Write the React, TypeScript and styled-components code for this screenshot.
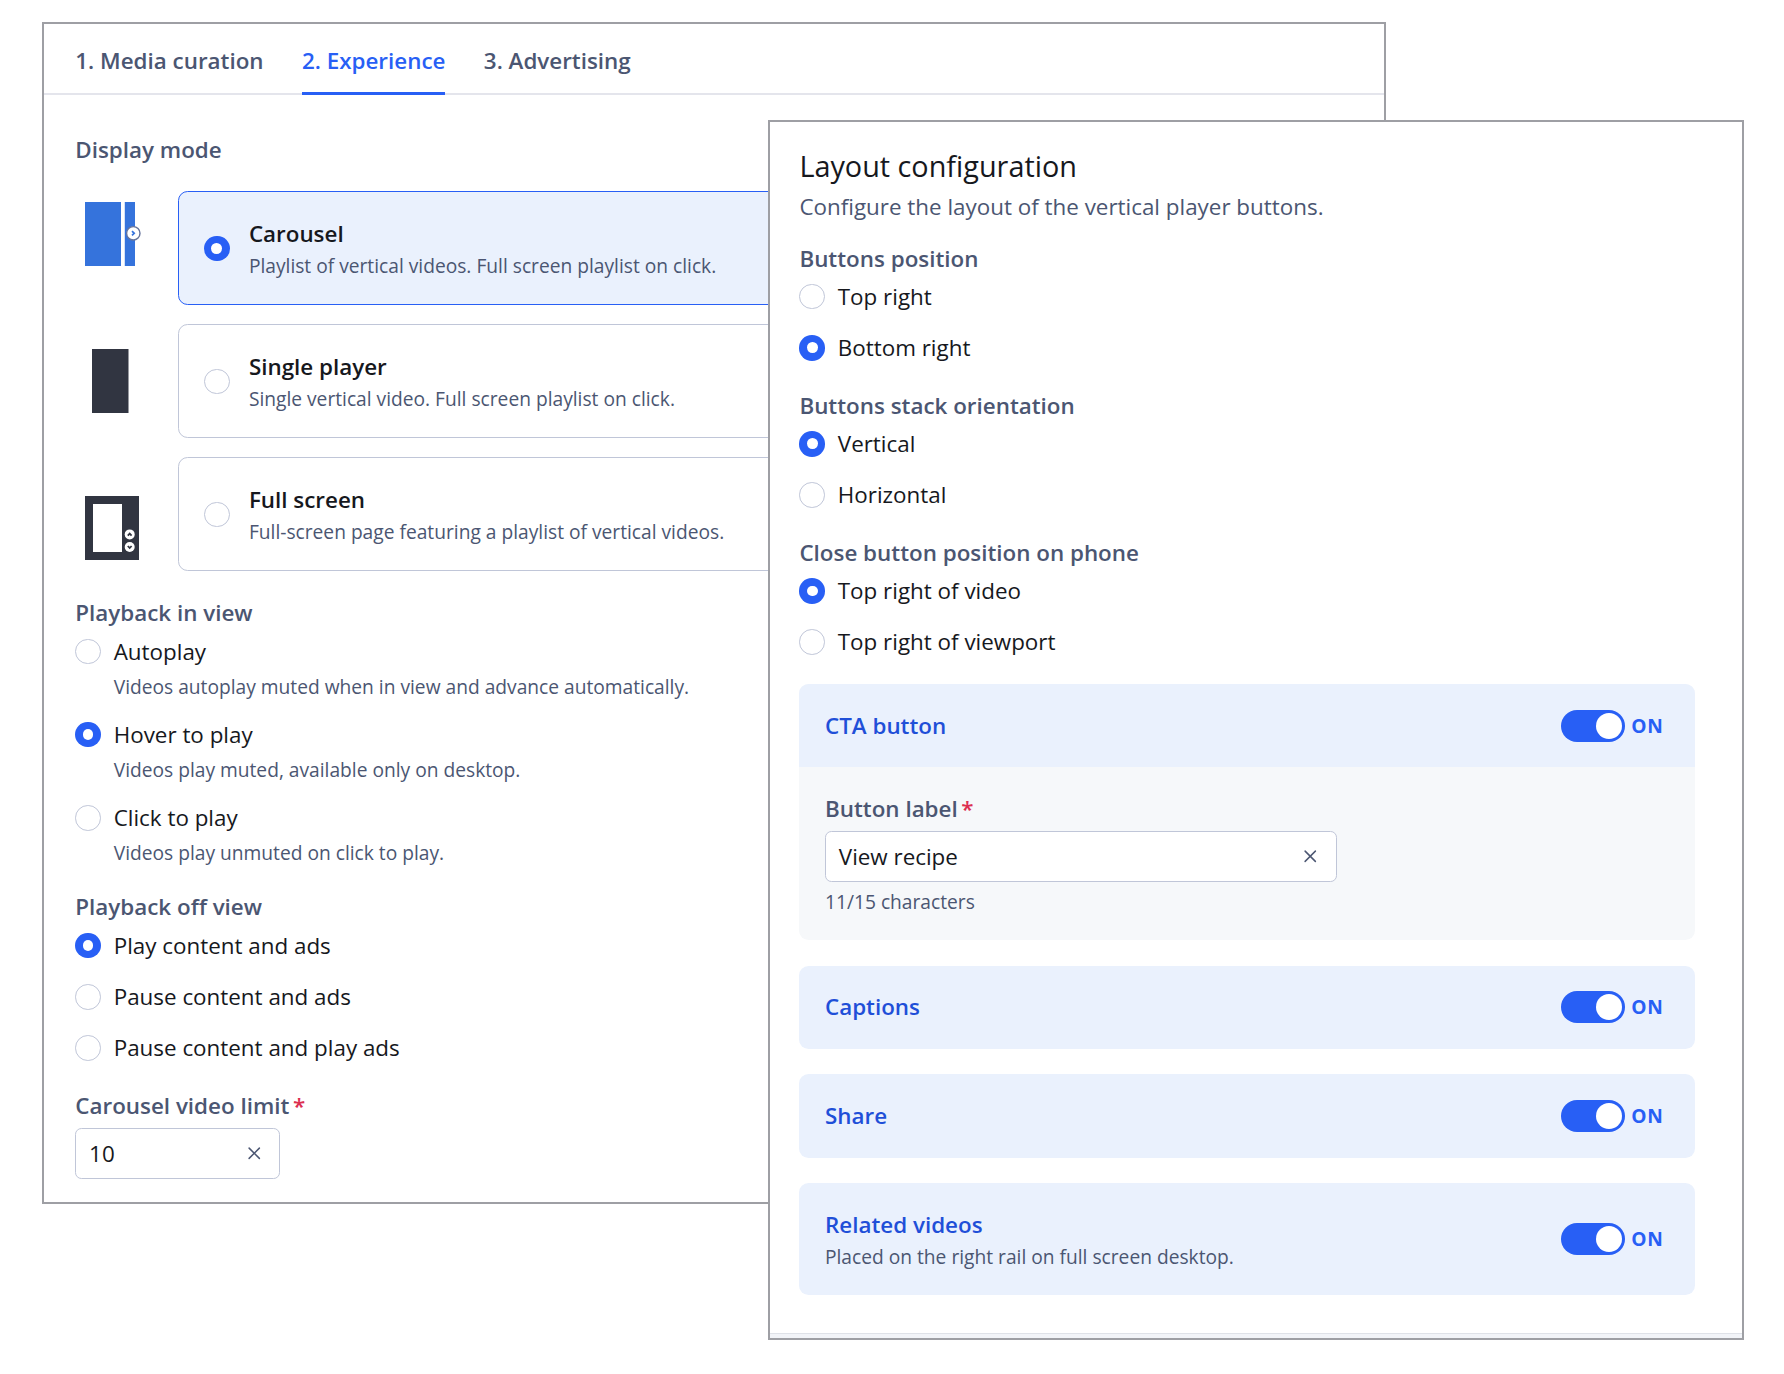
import React from 'react';
import styled, { createGlobalStyle, css } from 'styled-components';
import { X } from 'lucide-react';

const color = {
  frame: '#9e9fa4',
  slate: '#4b5672',
  ink: '#16181d',
  blue: '#285ff5',
  deepBlue: '#1f4fd8',
  tint: '#eaf1fd',
  line: '#c0c6d8',
  red: '#dc2f50',
  navy: '#313541',
  picture: '#3573dc',
};

const GlobalStyle = createGlobalStyle`
  *, *::before, *::after { box-sizing: border-box; }
  body {
    margin: 0;
    background: #fff;
    font-family: 'Open Sans', 'Noto Sans', sans-serif;
    font-size: 22.4px;
    line-height: 32px;
    color: ${color.ink};
  }
`;

const Canvas = styled.main`
  position: relative;
  width: 1784px;
  height: 1374px;
  overflow: hidden;
`;

const Window = styled.section`
  position: absolute;
  display: flex;
  flex-direction: column;
  background: #fff;
  border: 2px solid ${color.frame};
`;

const ExperienceWindow = styled(Window)`
  left: 42px;
  top: 22px;
  width: 1344px;
  height: 1182px;
`;

const LayoutWindow = styled(Window)`
  left: 768px;
  top: 120px;
  width: 976px;
  height: 1220px;
`;

const Tabs = styled.nav`
  display: flex;
  gap: 38.4px;
  height: 71px;
  padding-left: 31.3px;
  box-shadow: inset 0 -2px 0 #e4e5ec;
`;

const Tab = styled.a<{ $active?: boolean }>`
  height: 71px;
  padding-top: 20.6px;
  font-weight: 600;
  color: ${(p) => (p.$active ? color.blue : color.slate)};
  border-bottom: 3px solid ${(p) => (p.$active ? color.blue : 'transparent')};
`;

const ExperienceBody = styled.div`
  display: flex;
  flex-direction: column;
  padding: 38px 31px 0 31.3px;
`;

const Heading = styled.h3`
  margin: 0;
  padding-top: 1px;
  font-size: 22.4px;
  line-height: 31px;
  font-weight: 600;
  color: ${color.slate};
`;

const ModeArea = styled.div`
  display: flex;
  margin-top: 26.3px;
`;

const ModePictures = styled.div`
  display: flex;
  flex-direction: column;
  gap: 83px;
  width: 102.8px;
  padding: 10.7px 0 0 9.7px;

  svg { display: block; }
`;

const ModeCards = styled.div`
  flex: 1;
  display: flex;
  flex-direction: column;
  gap: 19.1px;
`;

const ModeCard = styled.label<{ $checked?: boolean }>`
  display: flex;
  align-items: center;
  gap: 19.2px;
  height: 114px;
  padding-left: 25px;
  border: 1px solid ${(p) => (p.$checked ? color.blue : color.line)};
  border-radius: 9.6px;
  background: ${(p) => (p.$checked ? color.tint : '#fff')};
`;

const TextStack = styled.div`
  display: flex;
  flex-direction: column;
  gap: 3px;
`;

const CardTitle = styled.span<{ $blue?: boolean }>`
  font-weight: 600;
  color: ${(p) => (p.$blue ? color.deepBlue : color.ink)};
`;

const Note = styled.span`
  font-size: 19.2px;
  line-height: 25.6px;
  color: ${color.slate};
`;

const Dot = styled.span<{ $checked?: boolean }>`
  display: grid;
  place-items: center;
  flex: none;
  width: 25.6px;
  height: 25.6px;
  border-radius: 50%;
  background: #fff;
  border: 1px solid ${color.line};

  ${(p) =>
    p.$checked &&
    css`
      border: 0;
      background: ${color.blue};

      &::after {
        content: '';
        width: 10.8px;
        height: 10.8px;
        border-radius: 50%;
        background: #fff;
      }
    `}
`;

const RadioGroup = styled.div<{ $before: number; $after: number; $gap: number }>`
  display: flex;
  flex-direction: column;
  margin-top: ${(p) => p.$before}px;

  & > ${Heading} { margin-bottom: ${(p) => p.$after}px; }
  & > label + label { margin-top: ${(p) => p.$gap}px; }
`;

const RadioRow = styled.label`
  display: grid;
  grid-template-columns: 25.6px auto;
  column-gap: 12.8px;
  row-gap: 9.6px;
  align-items: center;
  line-height: 25.6px;

  ${Note} { grid-column: 2; }
`;

const FieldLabel = styled.div`
  display: flex;
  gap: 3.6px;
  padding-top: 1px;
  line-height: 31px;
  font-weight: 600;
  color: ${color.slate};
`;

const Asterisk = styled.span`
  color: ${color.red};
`;

const InputBox = styled.div<{ $width: number }>`
  display: flex;
  align-items: center;
  justify-content: space-between;
  width: ${(p) => p.$width}px;
  height: 51.2px;
  margin-top: 7.2px;
  padding: 0 15px 0 12.8px;
  border: 1px solid ${color.line};
  border-radius: 6.4px;
  background: #fff;
`;

const LimitField = styled.div`
  margin-top: 28px;
`;

const LayoutBody = styled.div`
  flex: 1;
  width: 925.2px;
  padding: 24px 0 0 29.4px;
`;

const Title = styled.h2`
  margin: 0;
  font-size: 28.8px;
  line-height: 40px;
  font-weight: 400;
`;

const Subtitle = styled.p`
  margin: 5px 0 0;
  color: ${color.slate};
`;

const Panels = styled.div`
  display: flex;
  flex-direction: column;
  gap: 25.6px;
  margin-top: 29px;
`;

const Panel = styled.section`
  border-radius: 9.6px;
  overflow: hidden;
  background: #f6f8fa;
`;

const PanelHeader = styled.header<{ $tall?: boolean }>`
  display: flex;
  align-items: center;
  justify-content: space-between;
  height: ${(p) => (p.$tall ? 112 : 83.2)}px;
  padding: 0 25.6px;
  background: ${color.tint};
`;

const PanelBody = styled.div`
  display: flex;
  flex-direction: column;
  height: 172.8px;
  padding: 24.6px 25.6px 0;

  ${Note} { margin-top: 6.8px; }
`;

const SwitchGroup = styled.div`
  display: flex;
  align-items: center;
  gap: 6px;
`;

const Track = styled.span`
  display: flex;
  justify-content: flex-end;
  align-items: center;
  width: 64px;
  height: 32px;
  padding: 3px;
  border-radius: 16px;
  background: ${color.blue};
`;

const Knob = styled.span`
  width: 26px;
  height: 26px;
  border-radius: 50%;
  background: #fff;
`;

const SwitchText = styled.span`
  width: 38.4px;
  font-size: 19.2px;
  font-weight: 700;
  letter-spacing: 0.9px;
  color: ${color.blue};
`;

const Footer = styled.footer`
  height: 5px;
  border-top: 1px solid #dfe2e8;
  background: #f2f4f8;
`;

const CarouselPicture = () => (
  <svg width="60" height="64" viewBox="0 0 60 64">
    <rect width="36" height="64" fill={color.picture} />
    <rect x="39" width="11" height="64" fill="#d3e1f8" />
    <rect x="40" width="10" height="64" fill={color.picture} />
    <circle cx="48.3" cy="31.3" r="6.7" fill="#fff" stroke="#66749c" strokeWidth="1.4" />
    <path d="M47 29.2 49.2 31.3 47 33.4" fill="none" stroke={color.picture} strokeWidth="1.7" />
  </svg>
);

const SinglePicture = () => (
  <svg width="60" height="64" viewBox="0 0 60 64">
    <rect x="7" width="36.5" height="64" fill={color.navy} />
  </svg>
);

const FullPicture = () => (
  <svg width="60" height="64" viewBox="0 0 60 64">
    <rect width="54" height="64" fill={color.navy} />
    <rect x="8" y="8" width="29" height="48" fill="#fff" />
    <circle cx="44.7" cy="38.4" r="5" fill="#fff" />
    <circle cx="44.7" cy="51" r="5" fill="#fff" />
    <path d="M42.8 39.6 44.7 37.6 46.6 39.6M42.8 50 44.7 52 46.6 50" fill="none" stroke={color.navy} strokeWidth="1.8" />
  </svg>
);

type Option = { label: string; note?: string; on?: boolean };

type RadiosProps = { title: string; options: Option[]; before: number; after?: number; gap?: number };

const Radios = ({ title, options, before, after = 9.9, gap = 25.6 }: RadiosProps) => (
  <RadioGroup $before={before} $after={after} $gap={gap}>
    <Heading>{title}</Heading>
    {options.map((o) => (
      <RadioRow key={o.label}>
        <Dot $checked={o.on} />
        <span>{o.label}</span>
        {o.note && <Note>{o.note}</Note>}
      </RadioRow>
    ))}
  </RadioGroup>
);

const Field = ({ label, value, width }: { label: string; value: string; width: number }) => (
  <>
    <FieldLabel>
      {label}
      <Asterisk>*</Asterisk>
    </FieldLabel>
    <InputBox $width={width}>
      <span>{value}</span>
      <X size={20.5} strokeWidth={1.75} color={color.slate} />
    </InputBox>
  </>
);

const Switch = () => (
  <SwitchGroup>
    <Track>
      <Knob />
    </Track>
    <SwitchText>ON</SwitchText>
  </SwitchGroup>
);

const modes: Option[] = [
  { label: 'Carousel', note: 'Playlist of vertical videos. Full screen playlist on click.', on: true },
  { label: 'Single player', note: 'Single vertical video. Full screen playlist on click.' },
  { label: 'Full screen', note: 'Full-screen page featuring a playlist of vertical videos.' },
];

export default function App() {
  return (
    <Canvas>
      <GlobalStyle />
      <ExperienceWindow>
        <Tabs>
          <Tab>1. Media curation</Tab>
          <Tab $active>2. Experience</Tab>
          <Tab>3. Advertising</Tab>
        </Tabs>
        <ExperienceBody>
          <Heading>Display mode</Heading>
          <ModeArea>
            <ModePictures>
              <CarouselPicture />
              <SinglePicture />
              <FullPicture />
            </ModePictures>
            <ModeCards>
              {modes.map((m) => (
                <ModeCard key={m.label} $checked={m.on}>
                  <Dot $checked={m.on} />
                  <TextStack>
                    <CardTitle>{m.label}</CardTitle>
                    <Note>{m.note}</Note>
                  </TextStack>
                </ModeCard>
              ))}
            </ModeCards>
          </ModeArea>
          <Radios
            title="Playback in view"
            before={24.8}
            after={10.4}
            gap={22.4}
            options={[
              { label: 'Autoplay', note: 'Videos autoplay muted when in view and advance automatically.' },
              { label: 'Hover to play', note: 'Videos play muted, available only on desktop.', on: true },
              { label: 'Click to play', note: 'Videos play unmuted on click to play.' },
            ]}
          />
          <Radios
            title="Playback off view"
            before={24.3}
            after={10.8}
            options={[
              { label: 'Play content and ads', on: true },
              { label: 'Pause content and ads' },
              { label: 'Pause content and play ads' },
            ]}
          />
          <LimitField>
            <Field label="Carousel video limit" value="10" width={204.8} />
          </LimitField>
        </ExperienceBody>
      </ExperienceWindow>

      <LayoutWindow>
        <LayoutBody>
          <Title>Layout configuration</Title>
          <Subtitle>Configure the layout of the vertical player buttons.</Subtitle>
          <Radios
            title="Buttons position"
            before={19}
            options={[{ label: 'Top right' }, { label: 'Bottom right', on: true }]}
          />
          <Radios
            title="Buttons stack orientation"
            before={28.5}
            options={[{ label: 'Vertical', on: true }, { label: 'Horizontal' }]}
          />
          <Radios
            title="Close button position on phone"
            before={28.5}
            options={[{ label: 'Top right of video', on: true }, { label: 'Top right of viewport' }]}
          />
          <Panels>
            <Panel>
              <PanelHeader>
                <CardTitle $blue>CTA button</CardTitle>
                <Switch />
              </PanelHeader>
              <PanelBody>
                <Field label="Button label" value="View recipe" width={512} />
                <Note>11/15 characters</Note>
              </PanelBody>
            </Panel>
            <Panel>
              <PanelHeader>
                <CardTitle $blue>Captions</CardTitle>
                <Switch />
              </PanelHeader>
            </Panel>
            <Panel>
              <PanelHeader>
                <CardTitle $blue>Share</CardTitle>
                <Switch />
              </PanelHeader>
            </Panel>
            <Panel>
              <PanelHeader $tall>
                <TextStack>
                  <CardTitle $blue>Related videos</CardTitle>
                  <Note>Placed on the right rail on full screen desktop.</Note>
                </TextStack>
                <Switch />
              </PanelHeader>
            </Panel>
          </Panels>
        </LayoutBody>
        <Footer />
      </LayoutWindow>
    </Canvas>
  );
}
